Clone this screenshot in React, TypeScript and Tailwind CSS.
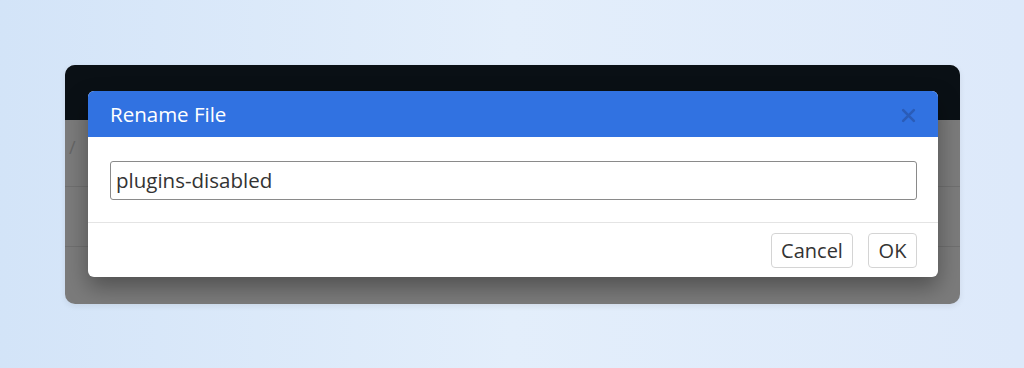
import React from 'react';

const App: React.FC = () => {
    return (
        <div
            className="w-[1024px] h-[368px] overflow-hidden bg-gradient-to-r from-[#d3e4f8] via-[#e3eefb] to-[#dde9fa] pt-[65px] pl-[65px]"
            style={{ fontFamily: '"Open Sans", "Noto Sans", sans-serif' }}
        >
            {/* app window behind the dialog */}
            <div className="relative w-[895px] h-[239px] rounded-[10px] overflow-hidden bg-[#7b7b7b] shadow-[0_2px_6px_rgba(0,0,0,0.08)]">
                <div className="h-[55px] bg-[#0a1015]" />
                <div className="flex flex-col">
                    <div className="h-[67px] border-b border-[#6f6f6f] pl-[4px] pt-[18px] text-[18px] leading-none text-[#656565]">/</div>
                    <div className="h-[60px] border-b border-[#6f6f6f]" />
                </div>

                {/* modal */}
                <div className="absolute left-[23px] top-[26px] w-[850px] h-[186px] rounded-[6px] overflow-hidden bg-white shadow-[0_10px_22px_rgba(0,0,0,0.35)] flex flex-col">
                    <div className="h-[46px] bg-[#3172e1] flex items-center justify-between pl-[22px] pr-[22px]">
                        <span className="text-[20.5px] text-white leading-none">Rename File</span>
                        <svg width="15" height="15" viewBox="0 0 14 14" className="mt-[2px]">
                            <path d="M2 2 L12 12 M12 2 L2 12" stroke="#2a5cb8" strokeWidth="2.4" strokeLinecap="round" />
                        </svg>
                    </div>
                    <div className="pt-[24px] pb-[22px] pl-[22px] pr-[21px] border-b border-[#e4e4e4]">
                        <div className="h-[39px] border border-[#8a8a8a] rounded-[3px] flex items-center pl-[5px] text-[20.5px] text-[#333]">
                            plugins-disabled
                        </div>
                    </div>
                    <div className="flex-1 flex items-start justify-end gap-[15px] pt-[10px] pr-[21px]">
                        <button className="h-[35px] w-[82px] border border-[#d4d4d4] rounded-[4px] text-[20px] text-[#333] leading-none">Cancel</button>
                        <button className="h-[35px] w-[49px] border border-[#d4d4d4] rounded-[4px] text-[20px] text-[#333] leading-none">OK</button>
                    </div>
                </div>
            </div>
        </div>
    );
};

export default App;
